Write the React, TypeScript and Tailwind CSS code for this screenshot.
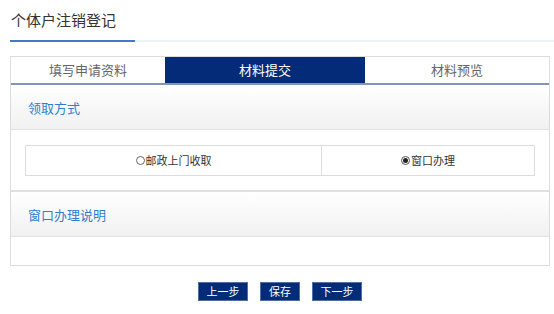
import React from 'react';

const font = { fontFamily: '"Microsoft YaHei", "Noto Sans CJK SC", "Noto Sans", sans-serif' };

const SectionHeader: React.FC<{ title: string }> = ({ title }) => (
  <div className="h-[45px] flex items-center pl-[17px] pt-[2px] bg-gradient-to-b from-white to-[#f1f1f1] border-b border-[#e2e2e2]">
    <span className="text-[13px] text-[#2f7fcf]">{title}</span>
  </div>
);

const App: React.FC = () => {
  const tabs = [
    { label: '填写申请资料', w: 'w-[154px]', active: false },
    { label: '材料提交', w: 'w-[200px]', active: true },
    { label: '材料预览', w: 'flex-1', active: false },
  ];

  return (
    <div className="w-[554px] h-[314px] bg-white overflow-hidden" style={font}>
      <div className="flex ml-[10px] pt-[10px]">
        <div className="w-[125px] border-b-2 border-[#3f7cc4] pb-[10px] pl-px">
          <p className="text-[15px] leading-[20px] text-[#333]">个体户注销登记</p>
        </div>
        <div className="flex-1 border-b-2 border-[#f0f4f9]" />
      </div>

      <div className="mx-[10px] mt-[14px] w-[540px] border border-[#dcdcdc]">
        <div className="flex h-[28px] border-b-2 border-[#8495b6]">
          {tabs.map((t) => (
            <div
              key={t.label}
              className={`${t.w} flex items-center justify-center text-[13px] ${
                t.active ? 'bg-[#032b78] text-white' : 'bg-white text-[#666]'
              }`}
            >
              {t.label}
            </div>
          ))}
        </div>

        <SectionHeader title="领取方式" />
        <div className="px-[14px] pt-[15px] pb-[14px] border-b-2 border-[#e0e0e0]">
          <div className="flex h-[31px] border border-[#dcdcdc] text-[11px] text-[#333]">
            <div className="w-[296px] flex items-center justify-center border-r border-[#dcdcdc]">
              <span className="inline-block w-[9px] h-[9px] rounded-full border border-[#666] mr-px" />
              邮政上门收取
            </div>
            <div className="flex-1 flex items-center justify-center">
              <span className="inline-flex items-center justify-center w-[9px] h-[9px] rounded-full border border-[#555] mr-px">
                <span className="w-[5px] h-[5px] rounded-full bg-[#222]" />
              </span>
              窗口办理
            </div>
          </div>
        </div>

        <SectionHeader title="窗口办理说明" />
        <div className="h-[28px]" />
      </div>

      <div className="flex justify-center gap-[12px] mt-[16px] pl-[6px]">
        <button className="w-[50px] h-[19px] bg-[#032b78] border border-[#4e6ea6] text-white text-[11px] leading-none">上一步</button>
        <button className="w-[40px] h-[19px] bg-[#032b78] border border-[#4e6ea6] text-white text-[11px] leading-none">保存</button>
        <button className="w-[50px] h-[19px] bg-[#032b78] border border-[#4e6ea6] text-white text-[11px] leading-none">下一步</button>
      </div>
    </div>
  );
};

export default App;
